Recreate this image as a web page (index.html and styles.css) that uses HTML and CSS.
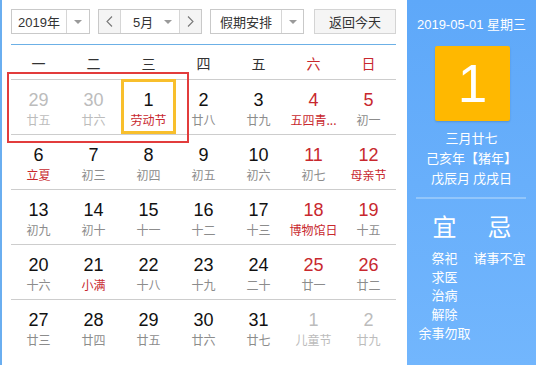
FILE: index.html
```html
<!DOCTYPE html>
<html lang="zh-CN">
<head>
<meta charset="utf-8">
<title>万年历</title>
<link rel="stylesheet" href="styles.css">
</head>
<body>
<div class="cal">
  <div class="main">
    <div class="toolbar">
      <div class="sel year">
        <span class="val">2019年</span>
        <span class="drop"><i class="tri"></i></span>
      </div>
      <div class="sel month">
        <span class="nav"><svg width="7" height="11" viewBox="0 0 7 11"><polyline points="6,0.5 1,5.5 6,10.5" fill="none" stroke="#777" stroke-width="1.1"/></svg></span>
        <span class="val mval">5月<i class="tri"></i></span>
        <span class="nav nav-r"><svg width="7" height="11" viewBox="0 0 7 11"><polyline points="1,0.5 6,5.5 1,10.5" fill="none" stroke="#777" stroke-width="1.1"/></svg></span>
      </div>
      <div class="sel hol">
        <span class="val">假期安排</span>
        <span class="drop"><i class="tri"></i></span>
      </div>
      <div class="btn">返回今天</div>
    </div>
    <div class="rule"></div>
    <div class="week">
      <span>一</span><span>二</span><span>三</span><span>四</span><span>五</span><span class="red">六</span><span class="red">日</span>
    </div>
    <div class="grid">
      <div class="day other"><b>29</b><em>廿五</em></div>
      <div class="day other"><b>30</b><em>廿六</em></div>
      <div class="day today"><b>1</b><em class="fest">劳动节</em></div>
      <div class="day"><b>2</b><em>廿八</em></div>
      <div class="day"><b>3</b><em>廿九</em></div>
      <div class="day wk"><b>4</b><em class="fest">五四青...</em></div>
      <div class="day wk"><b>5</b><em>初一</em></div>

      <div class="day"><b>6</b><em class="fest">立夏</em></div>
      <div class="day"><b>7</b><em>初三</em></div>
      <div class="day"><b>8</b><em>初四</em></div>
      <div class="day"><b>9</b><em>初五</em></div>
      <div class="day"><b>10</b><em>初六</em></div>
      <div class="day wk"><b>11</b><em>初七</em></div>
      <div class="day wk"><b>12</b><em class="fest">母亲节</em></div>

      <div class="day"><b>13</b><em>初九</em></div>
      <div class="day"><b>14</b><em>初十</em></div>
      <div class="day"><b>15</b><em>十一</em></div>
      <div class="day"><b>16</b><em>十二</em></div>
      <div class="day"><b>17</b><em>十三</em></div>
      <div class="day wk"><b>18</b><em class="fest">博物馆日</em></div>
      <div class="day wk"><b>19</b><em>十五</em></div>

      <div class="day"><b>20</b><em>十六</em></div>
      <div class="day"><b>21</b><em class="fest">小满</em></div>
      <div class="day"><b>22</b><em>十八</em></div>
      <div class="day"><b>23</b><em>十九</em></div>
      <div class="day"><b>24</b><em>二十</em></div>
      <div class="day wk"><b>25</b><em>廿一</em></div>
      <div class="day wk"><b>26</b><em>廿二</em></div>

      <div class="day"><b>27</b><em>廿三</em></div>
      <div class="day"><b>28</b><em>廿四</em></div>
      <div class="day"><b>29</b><em>廿五</em></div>
      <div class="day"><b>30</b><em>廿六</em></div>
      <div class="day"><b>31</b><em>廿七</em></div>
      <div class="day other"><b>1</b><em>儿童节</em></div>
      <div class="day other"><b>2</b><em>廿九</em></div>
    </div>
    <div class="mark"></div>
  </div>
  <div class="side">
    <div class="date">2019-05-01 星期三</div>
    <div class="big">1</div>
    <div class="lunar">
      <div>三月廿七</div>
      <div>己亥年【猪年】</div>
      <div>戊辰月 戊戌日</div>
    </div>
    <div class="sep"></div>
    <div class="yj">
      <div class="col">
        <div class="h">宜</div>
        <div>祭祀</div>
        <div>求医</div>
        <div>治病</div>
        <div>解除</div>
        <div>余事勿取</div>
      </div>
      <div class="col">
        <div class="h">忌</div>
        <div>诸事不宜</div>
      </div>
    </div>
  </div>
</div>
</body>
</html>
```

FILE: styles.css
```css
* { box-sizing: border-box; }
html, body { margin: 0; padding: 0; background: #fff; }
body {
  font-family: "Liberation Sans", Arial, "Noto Sans CJK SC", sans-serif;
  color: #333;
}
.cal {
  display: flex;
  width: 536px;
  height: 365px;
  overflow: hidden;
}
.main {
  position: relative;
  width: 407px;
  border-left: 2px solid #6aaef0;
  padding-left: 9px;
}
.toolbar {
  display: flex;
  margin-top: 9px;
  height: 25px;
  font-size: 13px;
}
.sel {
  display: flex;
  height: 25px;
  border: 1px solid #c9c9c9;
  background: #fff;
}
.sel .val {
  display: flex;
  align-items: center;
  justify-content: center;
  font-family: "Noto Sans CJK SC", sans-serif;
  color: #333;
}
.year { width: 79px; }
.year .val { width: 54px; font-family: "Liberation Sans", "Noto Sans CJK SC", sans-serif; }
.drop {
  flex: 1;
  display: flex;
  align-items: center;
  justify-content: center;
  border-left: 1px solid #d6d6d6;
}
.tri {
  display: inline-block;
  width: 0;
  height: 0;
  border-left: 4px solid transparent;
  border-right: 4px solid transparent;
  border-top: 4px solid #9a9a9a;
}
.month { width: 104px; margin-left: 8px; }
.nav {
  width: 22px;
  display: flex;
  align-items: center;
  justify-content: center;
  background: #f4f4f4;
  border-right: 1px solid #d6d6d6;
}
.nav-r { border-right: 0; border-left: 1px solid #d6d6d6; }
.mval {
  flex: 1;
  justify-content: space-between !important;
  padding: 0 7px 0 12px;
  font-family: "Liberation Sans", "Noto Sans CJK SC", sans-serif !important;
}
.hol { width: 94px; margin-left: 8px; }
.hol .val { width: 70px; }
.btn {
  width: 82px;
  margin-left: 10px;
  height: 25px;
  border: 1px solid #d4d4d4;
  background: #f5f5f5;
  display: flex;
  align-items: center;
  justify-content: center;
  font-family: "Noto Sans CJK SC", sans-serif;
  color: #333;
}
.rule {
  width: 385px;
  height: 1px;
  margin-top: 10px;
  background: #6cb0e6;
}
.week {
  display: grid;
  grid-template-columns: repeat(7, 55px);
  height: 34px;
  align-items: center;
  font-family: "Noto Sans CJK SC", sans-serif;
  font-size: 14px;
  color: #333;
}
.week span { text-align: center; padding-top: 1px; }
.red { color: #c8282e; }
.grid {
  display: grid;
  grid-template-columns: repeat(7, 55px);
  grid-auto-rows: 55px;
  width: 385px;
}
.day {
  border-top: 1px solid #cdcdcd;
  display: flex;
  flex-direction: column;
  align-items: center;
  padding-top: 9px;
  text-align: center;
}
.day b {
  font-weight: normal;
  font-size: 18px;
  line-height: 22px;
  color: #111;
  font-family: "Liberation Sans", Arial, sans-serif;
}
.day em {
  font-style: normal;
  font-size: 12px;
  line-height: 18px;
  color: #8c8c8c;
  font-family: "Noto Sans CJK SC", sans-serif;
  white-space: nowrap;
}
.day.wk b { color: #c8282e; }
.day em.fest { color: #c8282e; }
.day.other b, .day.other em { color: #bcbcbc; }
.day.today {
  border: 3px solid #f8bf2c;
  padding-top: 7px;
}
.mark {
  position: absolute;
  left: 5px;
  top: 72px;
  width: 182px;
  height: 71px;
  border: 2px solid #e23c3c;
}
.side {
  width: 129px;
  height: 365px;
  background: linear-gradient(#5ea8f9, #72b6fd);
  color: #fff;
  text-align: center;
  font-family: "Liberation Sans", Arial, "Noto Sans CJK SC", sans-serif;
}
.date {
  margin-top: 16px;
  font-size: 13px;
  line-height: 17px;
}
.big {
  width: 75px;
  height: 75px;
  margin: 13px 0 0 28px;
  background: #ffb800;
  border-radius: 2px;
  box-shadow: 0 1px 2px rgba(0,0,0,0.15);
  font-size: 53px;
  line-height: 75px;
  font-family: "Liberation Sans", Arial, sans-serif;
}
.lunar {
  margin-top: 7px;
  font-family: "Noto Sans CJK SC", sans-serif;
  font-size: 13px;
  line-height: 20px;
}
.sep {
  width: 110px;
  height: 2px;
  margin: 9px 0 0 9px;
  background: #92c6fb;
}
.yj {
  display: flex;
  padding-left: 10px;
  margin-top: 13px;
  font-family: "Noto Sans CJK SC", sans-serif;
  font-size: 13px;
  line-height: 18.7px;
}
.col { width: 55px; }
.col .h {
  font-size: 24px;
  line-height: 28px;
  margin-bottom: 9px;
}
```
